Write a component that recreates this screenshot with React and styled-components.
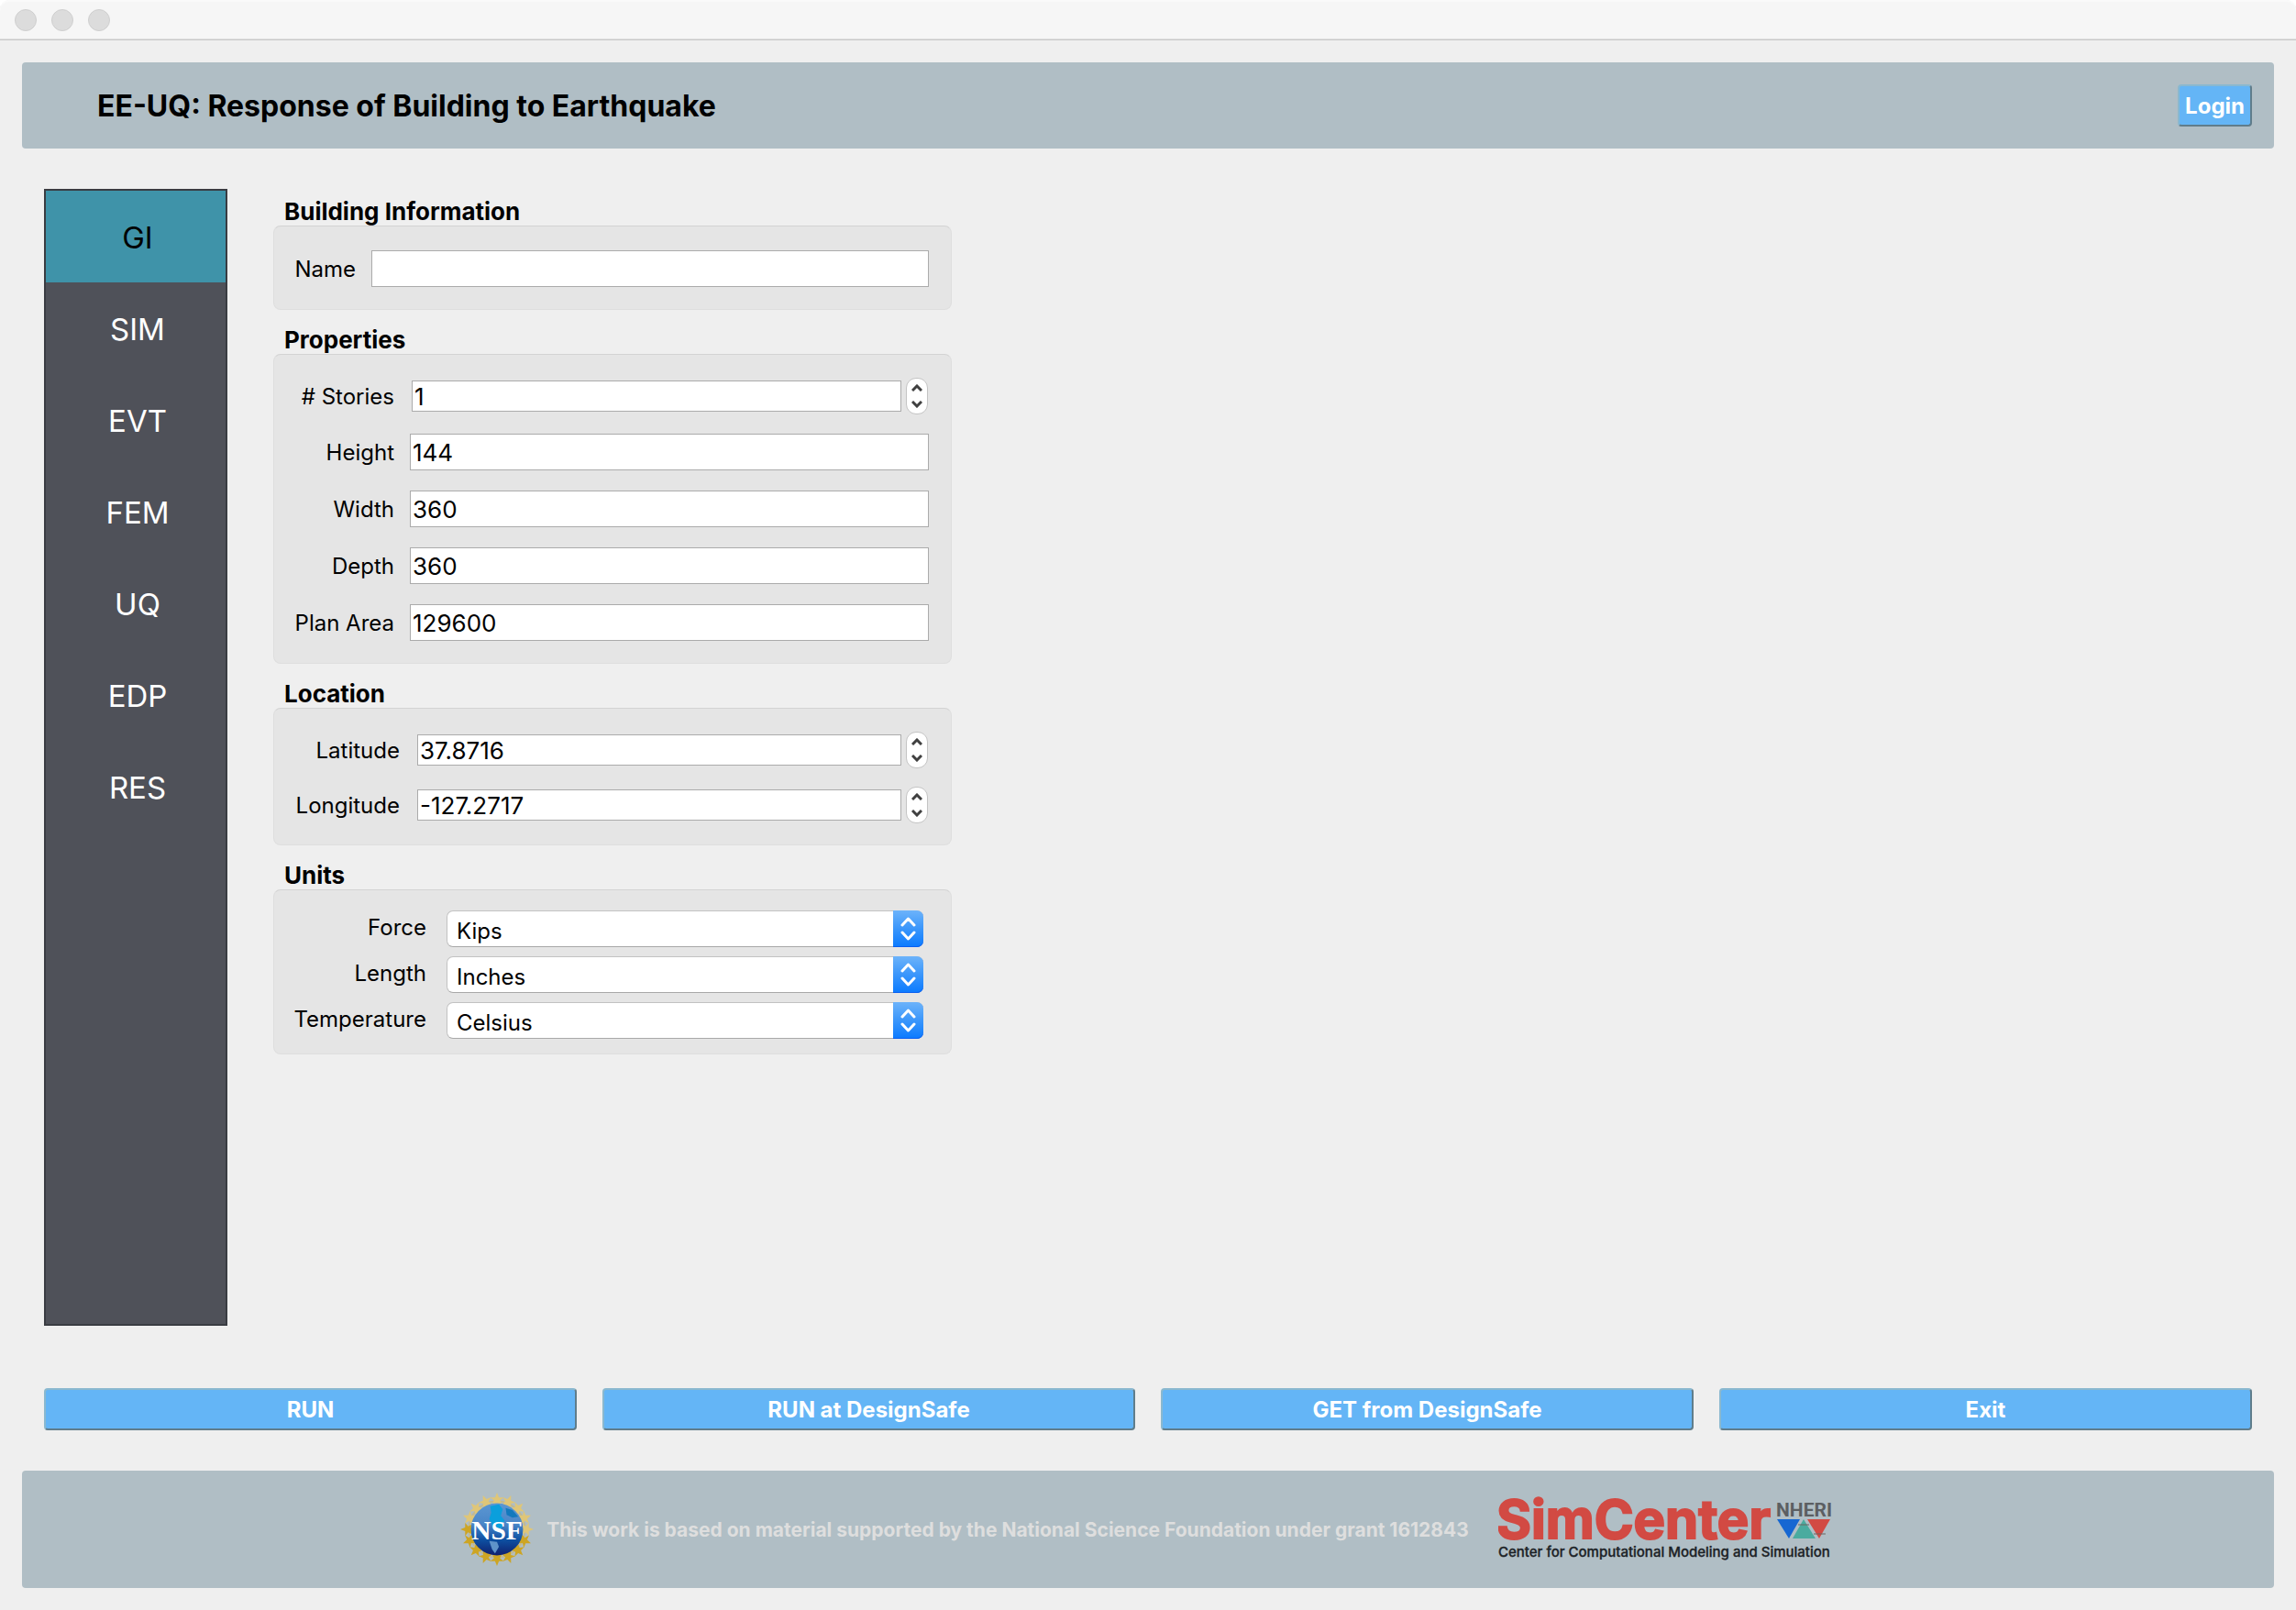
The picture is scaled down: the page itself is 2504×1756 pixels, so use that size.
import React, { useId, useState } from 'react';
import styled, { createGlobalStyle } from 'styled-components';

const GlobalStyle = createGlobalStyle`
  *, *::before, *::after { box-sizing: border-box; }
  html, body, #root { height: 100%; }
  body {
    margin: 0;
    background: #efefef;
    color: #000;
    font-family: Inter, "Liberation Sans", sans-serif;
    font-size: 24px;
    line-height: 30px;
  }
  button, input, select { font: inherit; color: inherit; margin: 0; }
`;

const Window = styled.div`
  min-height: 100vh;
  display: flex;
  flex-direction: column;
  background: #fff;
`;

const TitleBar = styled.div`
  display: flex;
  align-items: center;
  gap: 16px;
  height: 44px;
  padding: 0 16px;
  background: #f6f6f6;
  border-bottom: 1px solid #c8c8c8;
  box-shadow: inset 0 -1px #e0e0e0, inset 0 2px #fafafa;
  border-radius: 10px 10px 0 0;
`;

const WindowButton = styled.button`
  width: 24px;
  height: 24px;
  padding: 0;
  border: 1px solid #cfcfcf;
  border-radius: 50%;
  background: #dcdcdc;
`;

const Content = styled.div`
  flex: 1;
  display: flex;
  flex-direction: column;
  padding: 24px;
  background: #efefef;
`;

const Banner = styled.header`
  display: flex;
  align-items: center;
  justify-content: space-between;
  height: 94px;
  padding: 0 24px 0 82px;
  border-radius: 4px;
  background: #b0bec5;
`;

const BannerTitle = styled.h1`
  margin: 0;
  padding-top: 2px;
  font-size: 32px;
  line-height: 40px;
  font-weight: 700;
`;

const ActionButton = styled.button`
  height: 46px;
  padding: 2px 6px 0;
  border: 2px solid;
  border-color: #8ab8cf #607d8b #607d8b #8ab8cf;
  border-radius: 4px;
  background: #64b5f6;
  color: #fff;
  font-size: 24px;
  line-height: 30px;
  font-weight: 700;
`;

const Main = styled.main`
  flex: 1;
  display: flex;
  gap: 50px;
  padding: 44px 24px 0;
`;

const Sidebar = styled.nav`
  width: 200px;
  border: 2px solid #3a3c42;
  background: #4f5159;
`;

const SidebarItem = styled.button`
  display: block;
  width: 100%;
  height: 100px;
  padding: 2px 0 0 4px;
  border: 0;
  background: ${(p) => (p.$active ? '#3f93a9' : 'transparent')};
  color: ${(p) => (p.$active ? '#000' : '#fff')};
  font-size: 33px;
  line-height: 40px;
`;

const Form = styled.form`
  width: 740px;
  margin-top: -8px;
`;

const GroupTitle = styled.h2`
  margin: 0;
  padding: 18px 12px 0;
  font-size: 26px;
  line-height: 30px;
  font-weight: 700;
`;

const GroupBox = styled.div`
  display: flex;
  flex-direction: column;
  gap: ${(p) => (p.$compact ? 10 : 20)}px;
  padding: ${(p) => (p.$compact ? '22px 30px 16px 23px' : '25px 23px 23px')};
  border: 1px solid #dedede;
  border-top-color: #d3d3d3;
  border-radius: 8px;
  background: #e5e5e5;
`;

const Row = styled.div`
  display: grid;
  grid-template-columns: ${(p) => p.$label}px 1fr;
  column-gap: ${(p) => (p.$compact ? 22 : 16)}px;
  align-items: center;
`;

const Label = styled.label`
  justify-self: end;
  padding: ${(p) => (p.$compact ? '0 0 2px' : '2px 0 0')};
  white-space: nowrap;
`;

const TextInput = styled.input`
  width: 100%;
  min-width: 0;
  height: 42px;
  padding: 0 3px;
  border: 1px solid #e5e5e5;
  background: #fff;
  outline: 1px solid #ababab;
  outline-offset: -2px;
  font-size: 26px;
`;

const Spin = styled.div`
  display: flex;
  align-items: center;
  gap: 5px;
  padding: 0 2px 0 3px;
`;

const SpinInput = styled.input`
  flex: 1;
  min-width: 0;
  height: 34px;
  padding: 0 2px;
  border: 1px solid #ababab;
  border-radius: 0;
  background: #fff;
  font-size: 26px;
`;

const Stepper = styled.div`
  display: flex;
  flex-direction: column;
  width: 24px;
  height: 40px;
  border: 1px solid #c4c4c4;
  border-radius: 11px;
  background: #fff;
  overflow: hidden;
`;

const StepButton = styled.button`
  flex: 1;
  display: flex;
  align-items: ${(p) => (p.$up ? 'flex-end' : 'flex-start')};
  justify-content: center;
  padding: 5px 0;
  border: 0;
  background: none;
`;

const SelectBox = styled.div`
  display: flex;
  position: relative;
  height: 40px;
  border: 1px solid #c2c2c2;
  border-bottom-color: #a8a8a8;
  border-radius: 7px;
  background: #fff;
`;

const Select = styled.select`
  width: 100%;
  appearance: none;
  padding: 6px 44px 0 10px;
  border: 0;
  background: transparent;
`;

const SelectArrows = styled.span`
  position: absolute;
  top: -1px;
  right: -1px;
  bottom: -1px;
  width: 33px;
  display: flex;
  align-items: center;
  justify-content: center;
  border-radius: 0 7px 7px 0;
  background: linear-gradient(#6cb3fa, #3a96fb 50%, #0a7aff);
  box-shadow: inset 0 -1px #0a5ff0;
  pointer-events: none;
`;

const Actions = styled.div`
  display: grid;
  grid-template-columns: repeat(4, 1fr);
  gap: 28px;
  padding: 68px 24px 44px;
`;

const Footer = styled.footer`
  display: flex;
  align-items: center;
  justify-content: center;
  height: 128px;
  padding-right: 4px;
  border-radius: 4px;
  background: #b0bec5;
`;

const Grant = styled.p`
  margin: 0 32px 0 14px;
  padding-top: 2px;
  color: #dedede;
  font-size: 21px;
  line-height: 26px;
  font-weight: 700;
  white-space: nowrap;
`;

function Field({ label, labelWidth, value }) {
  const id = useId();
  return (
    <Row $label={labelWidth}>
      <Label htmlFor={id}>{label}</Label>
      <TextInput id={id} type="text" defaultValue={value} />
    </Row>
  );
}

function SpinField({ label, labelWidth, value }) {
  const id = useId();
  const [current, setCurrent] = useState(value);
  const step = (d) => setCurrent((v) => String(Number((Number(v) + d).toFixed(4))));
  return (
    <Row $label={labelWidth}>
      <Label htmlFor={id}>{label}</Label>
      <Spin>
        <SpinInput id={id} type="text" inputMode="decimal" value={current} onChange={(e) => setCurrent(e.target.value)} />
        <Stepper>
          <StepButton type="button" $up aria-label={`Increase ${label}`} onClick={() => step(1)}>
            <svg width="12" height="8" viewBox="0 0 12 8" fill="none" stroke="#404040" strokeWidth="3">
              <path d="M1 7 6 2l5 5" />
            </svg>
          </StepButton>
          <StepButton type="button" aria-label={`Decrease ${label}`} onClick={() => step(-1)}>
            <svg width="12" height="8" viewBox="0 0 12 8" fill="none" stroke="#404040" strokeWidth="3">
              <path d="M1 1l5 5 5-5" />
            </svg>
          </StepButton>
        </Stepper>
      </Spin>
    </Row>
  );
}

function SelectField({ label, options }) {
  const id = useId();
  return (
    <Row $label={143} $compact>
      <Label htmlFor={id} $compact>{label}</Label>
      <SelectBox>
        <Select id={id}>
          {options.map((o) => (
            <option key={o}>{o}</option>
          ))}
        </Select>
        <SelectArrows>
          <svg width="17" height="26" viewBox="0 0 17 26" fill="none" stroke="#fff" strokeWidth="3" strokeLinecap="round" strokeLinejoin="round">
            <path d="M2 9l6.500-7L15 9M2 17l6.500 7L15 17" />
          </svg>
        </SelectArrows>
      </SelectBox>
    </Row>
  );
}

function NsfLogo() {
  const points = Array.from({ length: 16 }, (_, i) => i * 22.5);
  return (
    <svg width="80" height="80" viewBox="-38 -38 76 76" role="img" aria-label="NSF">
      <defs>
        <linearGradient id="nsf-globe" x1="0" y1="0" x2="0" y2="1">
          <stop offset="0" stopColor="#5b97d2" />
          <stop offset="0.4" stopColor="#4a86c8" />
          <stop offset="0.7" stopColor="#0d50a2" />
          <stop offset="1" stopColor="#10206e" />
        </linearGradient>
      </defs>
      <circle r="29" fill="none" stroke="#c3b98f" strokeWidth="2" />
      {points.map((a) => (
        <path
          key={a}
          transform={`rotate(${a})`}
          d="M0-38l2 5 5 0-4 3 2 4h-10l2-4-4-3 5 0z"
          fill={Math.cos((a * Math.PI) / 180) > 0 ? '#dfc678' : '#cda524'}
        />
      ))}
      <circle r="27" fill="url(#nsf-globe)" />
      <path d="M-7-24l9-2 4 5-2 7 4 5-4 9-8-2-4-9 2-6z" fill="#0b9fdc" />
      <path d="M9-22l7 2 6 7-6 1-6-3z" fill="#1279bd" />
      <path d="M-8 12l8 1 2 5-4 7-3-4z" fill="#5f93c9" />
      <text x="0" y="10" textAnchor="middle" fontFamily="Liberation Serif, serif" fontWeight="700" fontSize="28" fill="#fff">NSF</text>
    </svg>
  );
}

function SimCenterLogo() {
  return (
    <svg width="364" height="92" viewBox="0 -8 364 92" role="img" aria-label="SimCenter">
      <text x="-2" y="48" fontFamily="Inter, sans-serif" fontWeight="700" fontSize="58" fill="#d24a43" stroke="#d24a43" strokeWidth="2">SimCenter</text>
      <text x="0" y="68" fontFamily="Inter, sans-serif" fontWeight="500" fontSize="15" fill="#1c2226" stroke="#1c2226" strokeWidth="0.3">Center for Computational Modeling and Simulation</text>
      <text x="303" y="24" fontFamily="Roboto, sans-serif" fontWeight="700" fontSize="21" fill="#5c5f62">NHERI</text>
      <path d="M304 27h25l-12 21z" fill="#1667d2" />
      <path d="M333 27l13 21h-25z" fill="#4aab9f" />
      <path d="M337 27h25l-12 21z" fill="#d24a43" />
      <path d="M327 33h12M344 43h13" stroke="#6a6460" strokeWidth="1" />
    </svg>
  );
}

const SECTIONS = ['GI', 'SIM', 'EVT', 'FEM', 'UQ', 'EDP', 'RES'];

export default function App() {
  const [section, setSection] = useState('GI');
  return (
    <Window>
      <GlobalStyle />
      <TitleBar>
        <WindowButton aria-label="Close" />
        <WindowButton aria-label="Minimize" />
        <WindowButton aria-label="Zoom" />
      </TitleBar>
      <Content>
        <Banner>
          <BannerTitle>EE-UQ: Response of Building to Earthquake</BannerTitle>
          <ActionButton type="button">Login</ActionButton>
        </Banner>
        <Main>
          <Sidebar>
            {SECTIONS.map((s) => (
              <SidebarItem key={s} type="button" $active={s === section} onClick={() => setSection(s)}>
                {s}
              </SidebarItem>
            ))}
          </Sidebar>
          <Form>
            <GroupTitle>Building Information</GroupTitle>
            <GroupBox>
              <Field label="Name" labelWidth={66} />
            </GroupBox>
            <GroupTitle>Properties</GroupTitle>
            <GroupBox>
              <SpinField label="# Stories" labelWidth={108} value="1" />
              <Field label="Height" labelWidth={108} value="144" />
              <Field label="Width" labelWidth={108} value="360" />
              <Field label="Depth" labelWidth={108} value="360" />
              <Field label="Plan Area" labelWidth={108} value="129600" />
            </GroupBox>
            <GroupTitle>Location</GroupTitle>
            <GroupBox>
              <SpinField label="Latitude" labelWidth={114} value="37.8716" />
              <SpinField label="Longitude" labelWidth={114} value="-127.2717" />
            </GroupBox>
            <GroupTitle>Units</GroupTitle>
            <GroupBox $compact>
              <SelectField label="Force" options={['Kips', 'Pounds', 'Newtons']} />
              <SelectField label="Length" options={['Inches', 'Feet', 'Meters']} />
              <SelectField label="Temperature" options={['Celsius', 'Fahrenheit', 'Kelvin']} />
            </GroupBox>
          </Form>
        </Main>
        <Actions>
          <ActionButton type="button">RUN</ActionButton>
          <ActionButton type="button">RUN at DesignSafe</ActionButton>
          <ActionButton type="button">GET from DesignSafe</ActionButton>
          <ActionButton type="button">Exit</ActionButton>
        </Actions>
        <Footer>
          <NsfLogo />
          <Grant>This work is based on material supported by the National Science Foundation under grant 1612843</Grant>
          <SimCenterLogo />
        </Footer>
      </Content>
    </Window>
  );
}
